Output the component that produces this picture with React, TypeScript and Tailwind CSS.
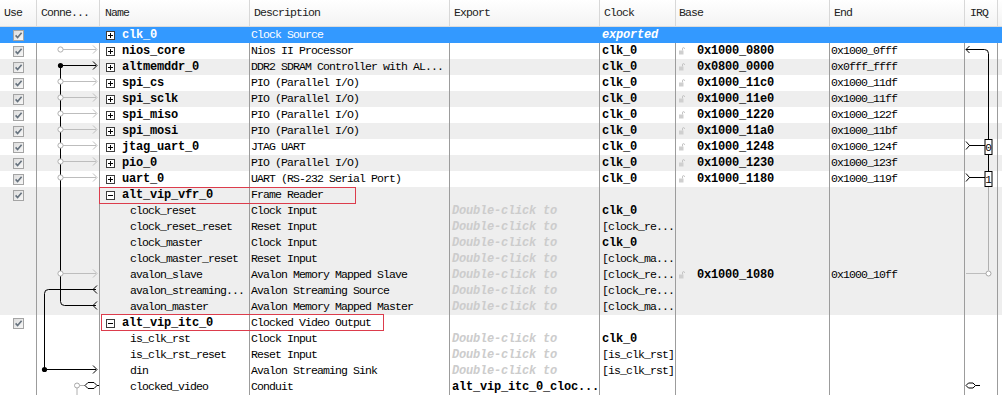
import React from "react";

type R = {
  t: "m" | "c";
  name: string;
  desc: string;
  exp?: string;
  clock?: string;
  clockBold?: boolean;
  base?: string;
  end?: string;
  bg: "w" | "g" | "s";
  open?: boolean;
};

const DBL = "__dbl__";

const rows: R[] = [
  { t: "m", name: "clk_0", desc: "Clock Source", clock: "exported", bg: "s" },
  { t: "m", name: "nios_core", desc: "Nios II Processor", clock: "clk_0", clockBold: true, base: "0x1000_0800", end: "0x1000_0fff", bg: "w" },
  { t: "m", name: "altmemddr_0", desc: "DDR2 SDRAM Controller with AL...", clock: "clk_0", clockBold: true, base: "0x0800_0000", end: "0x0fff_ffff", bg: "g" },
  { t: "m", name: "spi_cs", desc: "PIO (Parallel I/O)", clock: "clk_0", clockBold: true, base: "0x1000_11c0", end: "0x1000_11df", bg: "w" },
  { t: "m", name: "spi_sclk", desc: "PIO (Parallel I/O)", clock: "clk_0", clockBold: true, base: "0x1000_11e0", end: "0x1000_11ff", bg: "g" },
  { t: "m", name: "spi_miso", desc: "PIO (Parallel I/O)", clock: "clk_0", clockBold: true, base: "0x1000_1220", end: "0x1000_122f", bg: "w" },
  { t: "m", name: "spi_mosi", desc: "PIO (Parallel I/O)", clock: "clk_0", clockBold: true, base: "0x1000_11a0", end: "0x1000_11bf", bg: "g" },
  { t: "m", name: "jtag_uart_0", desc: "JTAG UART", clock: "clk_0", clockBold: true, base: "0x1000_1248", end: "0x1000_124f", bg: "w" },
  { t: "m", name: "pio_0", desc: "PIO (Parallel I/O)", clock: "clk_0", clockBold: true, base: "0x1000_1230", end: "0x1000_123f", bg: "g" },
  { t: "m", name: "uart_0", desc: "UART (RS-232 Serial Port)", clock: "clk_0", clockBold: true, base: "0x1000_1180", end: "0x1000_119f", bg: "w" },
  { t: "m", name: "alt_vip_vfr_0", desc: "Frame Reader", bg: "g", open: true },
  { t: "c", name: "clock_reset", desc: "Clock Input", exp: DBL, clock: "clk_0", clockBold: true, bg: "g" },
  { t: "c", name: "clock_reset_reset", desc: "Reset Input", exp: DBL, clock: "[clock_re...", bg: "g" },
  { t: "c", name: "clock_master", desc: "Clock Input", exp: DBL, clock: "clk_0", clockBold: true, bg: "g" },
  { t: "c", name: "clock_master_reset", desc: "Reset Input", exp: DBL, clock: "[clock_ma...", bg: "g" },
  { t: "c", name: "avalon_slave", desc: "Avalon Memory Mapped Slave", exp: DBL, clock: "[clock_re...", base: "0x1000_1080", end: "0x1000_10ff", bg: "g" },
  { t: "c", name: "avalon_streaming...", desc: "Avalon Streaming Source", exp: DBL, clock: "[clock_re...", bg: "g" },
  { t: "c", name: "avalon_master", desc: "Avalon Memory Mapped Master", exp: DBL, clock: "[clock_ma...", bg: "g" },
  { t: "m", name: "alt_vip_itc_0", desc: "Clocked Video Output", bg: "w", open: true },
  { t: "c", name: "is_clk_rst", desc: "Clock Input", exp: DBL, clock: "clk_0", clockBold: true, bg: "w" },
  { t: "c", name: "is_clk_rst_reset", desc: "Reset Input", exp: DBL, clock: "[is_clk_rst]", bg: "w" },
  { t: "c", name: "din", desc: "Avalon Streaming Sink", exp: DBL, clock: "[is_clk_rst]", bg: "w" },
  { t: "c", name: "clocked_video", desc: "Conduit", exp: "alt_vip_itc_0_cloc...", bg: "w" },
];

const normal = "text-[11.5px] tracking-[-0.9px] leading-4";
const bold = "text-[12px] font-bold tracking-[-0.2px] leading-4";

function Check() {
  return (
    <svg width="11" height="11" viewBox="0 0 11 11">
      <defs>
        <linearGradient id="cbg" x1="0" y1="0" x2="1" y2="1">
          <stop offset="0" stopColor="#dcdcdc" />
          <stop offset="1" stopColor="#f8f8f8" />
        </linearGradient>
      </defs>
      <rect x="0.5" y="0.5" width="10" height="10" fill="url(#cbg)" stroke="#a4a4a4" />
      <path d="M2.6 5.4 L4.6 7.6 L8.6 2.8" fill="none" stroke="#66727e" strokeWidth="1.6" />
    </svg>
  );
}

function Expander({ open }: { open?: boolean }) {
  return (
    <svg width="9" height="9" viewBox="0 0 9 9" className="shrink-0">
      <rect x="0.5" y="0.5" width="8" height="8" fill="#fff" stroke="#3c3c3c" />
      <path d="M2 4.5 H7" stroke="#000" />
      {!open && <path d="M4.5 2 V7" stroke="#000" />}
    </svg>
  );
}

function Lock() {
  return (
    <svg width="6" height="8" viewBox="0 0 6 8" className="shrink-0">
      <path d="M3.5 3.5 V2 Q3.5 0.5 4.5 0.5 Q5.5 0.5 5.5 2" fill="none" stroke="#c4c4c4" />
      <rect x="0" y="3.5" width="4.5" height="4" fill="#cfcfcf" />
    </svg>
  );
}

function Row({ r }: { r: R }) {
  const sel = r.bg === "s";
  const bg = sel ? "bg-[#3399ff]" : r.bg === "g" ? "bg-[#eeeeee]" : "bg-white";
  const bc = sel ? "border-[#3399ff]" : "border-[#9c9c9c]";
  const txt = sel ? "text-white" : "text-black";
  const cell = `h-4 shrink-0 border-r ${bc} overflow-hidden whitespace-nowrap flex items-center`;
  return (
    <div className={`flex h-4 ${bg} ${txt}`}>
      <div className={`${cell} w-[37px] justify-center`}>{r.t === "m" && <Check />}</div>
      <div className={`${cell} w-[63px]`} />
      <div className={`${cell} w-[150px] ${r.t === "m" ? "pl-[6px] gap-[7px]" : "pl-[30px]"}`}>
        {r.t === "m" && <Expander open={r.open} />}
        <span className={r.t === "m" ? bold : normal}>{r.name}</span>
      </div>
      <div className={`${cell} w-[200px] pl-[1px]`}>
        <span className={normal}>{r.desc}</span>
      </div>
      <div className={`${cell} w-[150px] pl-[2px]`}>
        {r.exp === DBL ? (
          <span className={`${bold} italic text-[#cccccc]`}>Double-click to</span>
        ) : r.exp ? (
          <span className={bold}>{r.exp}</span>
        ) : null}
      </div>
      <div className={`${cell} w-[76px] pl-[2px]`}>
        {r.clock && (
          <span className={sel ? `${bold} italic` : r.clockBold ? bold : normal}>{r.clock}</span>
        )}
      </div>
      <div className={`${cell} w-[154px] pl-[3px]`}>
        {r.base && (
          <>
            <Lock />
            <span className={`${bold} ml-[12px]`}>{r.base}</span>
          </>
        )}
      </div>
      <div className={`${cell} w-[135px] pl-[1px]`}>
        {r.end && <span className={normal}>{r.end}</span>}
      </div>
      <div className={`${cell} w-[33px]`} />
      <div className="h-4 flex-1" />
    </div>
  );
}

function ConnGraph() {
  const gray = [1, 3, 4, 5, 6, 7, 8, 9, 15];
  return (
    <svg className="absolute left-[36px] top-0" width="63" height="368" viewBox="0 0 63 368">
      <path d="M24.5 38 V274.5 Q24.5 278.5 28.5 278.5 H60" fill="none" stroke="#000" />
      <path d="M61 274.5 L57 278.5 L61 282.5" fill="none" stroke="#000" />
      <path d="M24.5 38.5 H60" stroke="#000" />
      <path d="M57 34.5 L61 38.5 L57 42.5" fill="none" stroke="#000" />
      <circle cx="24.5" cy="38.5" r="2.6" fill="#000" />
      <path d="M60 262.5 H12.5 Q8.5 262.5 8.5 266.5 V342.5 H60" fill="none" stroke="#000" />
      <path d="M61 258.5 L57 262.5 L61 266.5" fill="none" stroke="#000" />
      <path d="M57 338.5 L61 342.5 L57 346.5" fill="none" stroke="#000" />
      <circle cx="8.5" cy="342.5" r="2.6" fill="#000" />
      {gray.map((i) => {
        const y = 16 * i + 6.5;
        return (
          <g key={i}>
            <path d={`M27 ${y} H60`} stroke="#bdbdbd" />
            <path d={`M57 ${y - 4} L61 ${y} L57 ${y + 4}`} fill="none" stroke="#bdbdbd" />
            <circle cx="24.5" cy={y} r="2.6" fill="#fff" stroke="#b0b0b0" />
          </g>
        );
      })}
      <path d="M41 361 V368" stroke="#b0b0b0" />
      <path d="M43.5 358.5 H49" stroke="#b0b0b0" />
      <circle cx="41" cy="358.5" r="2.5" fill="#fff" stroke="#a8a8a8" />
      <path d="M49 358.5 L52 355.5 H58 L61 358.5 L58 361.5 H52 Z" fill="#fff" stroke="#000" />
      <path d="M61 358.5 H63" stroke="#000" />
    </svg>
  );
}

function IrqGraph() {
  return (
    <svg className="absolute left-[964px] top-0" width="34" height="368" viewBox="0 0 34 368">
      <path d="M2 22.5 H20.5 Q24.5 22.5 24.5 26.5 V144.5" fill="none" stroke="#000" />
      <path d="M5.5 19 L2 22.5 L5.5 26" fill="none" stroke="#000" />
      <path d="M24.5 160 V243.5" stroke="#b0b0b0" />
      <path d="M2 246.5 H22" stroke="#bdbdbd" />
      <circle cx="24.5" cy="246.5" r="2.5" fill="#fff" stroke="#a8a8a8" />
      {[7, 9].map((i, k) => {
        const top = 16 * i;
        const y = top + 6.5;
        return (
          <g key={i}>
            <path d={`M5 ${y} H21`} stroke="#000" />
            <path d={`M2 ${y - 4} L5.5 ${y} L2 ${y + 4}`} fill="none" stroke="#000" />
            <rect x="21" y={top + 0.5} width="7" height="15" fill="#fff" stroke="#000" />
            <text x="24.6" y={top + 12} textAnchor="middle" fontSize="11" fontFamily="Liberation Mono, monospace" fill="#000">
              {k}
            </text>
          </g>
        );
      })}
      <path d="M2 358.5 L4.5 356 H9 L11.5 358.5 L9 361 H4.5 Z" fill="#fff" stroke="#000" />
      <path d="M11.5 358.5 H16" stroke="#000" />
    </svg>
  );
}

export default function App() {
  const hcell = "h-full shrink-0 border-r border-[#d8d8d8] flex items-center overflow-hidden whitespace-nowrap";
  return (
    <div className="w-[1002px] h-[413px] bg-white font-['Liberation_Mono',monospace] text-black overflow-hidden">
      <div className="flex h-[27px] bg-linear-to-b from-white to-[#f3f3f3] border-b border-[#dcdcdc] text-[#222]">
        <div className={`${hcell} w-[37px] pl-[4px]`}><span className={normal}>Use</span></div>
        <div className={`${hcell} w-[63px] pl-[4px]`}><span className={normal}>Conne...</span></div>
        <div className={`${hcell} w-[150px] pl-[5px]`}><span className={normal}>Name</span></div>
        <div className={`${hcell} w-[200px] pl-[4px]`}><span className={normal}>Description</span></div>
        <div className={`${hcell} w-[150px] pl-[4px]`}><span className={normal}>Export</span></div>
        <div className={`${hcell} w-[76px] pl-[4px]`}><span className={normal}>Clock</span></div>
        <div className={`${hcell} w-[154px] pl-[3px]`}><span className={normal}>Base</span></div>
        <div className={`${hcell} w-[135px] pl-[4px]`}><span className={normal}>End</span></div>
        <div className={`${hcell} w-[33px] pl-[5px]`}><span className={normal}>IRQ</span></div>
        <div className="flex-1" />
      </div>
      <div className="relative">
        {rows.map((r, i) => (
          <Row key={i} r={r} />
        ))}
        <ConnGraph />
        <IrqGraph />
        <div className="absolute z-10 left-[99px] top-[160px] w-[257px] h-[17px] border border-[#dc3c4c]" />
        <div className="absolute z-10 left-[101px] top-[287px] w-[283px] h-[17px] border border-[#dc3c4c]" />
      </div>
    </div>
  );
}
